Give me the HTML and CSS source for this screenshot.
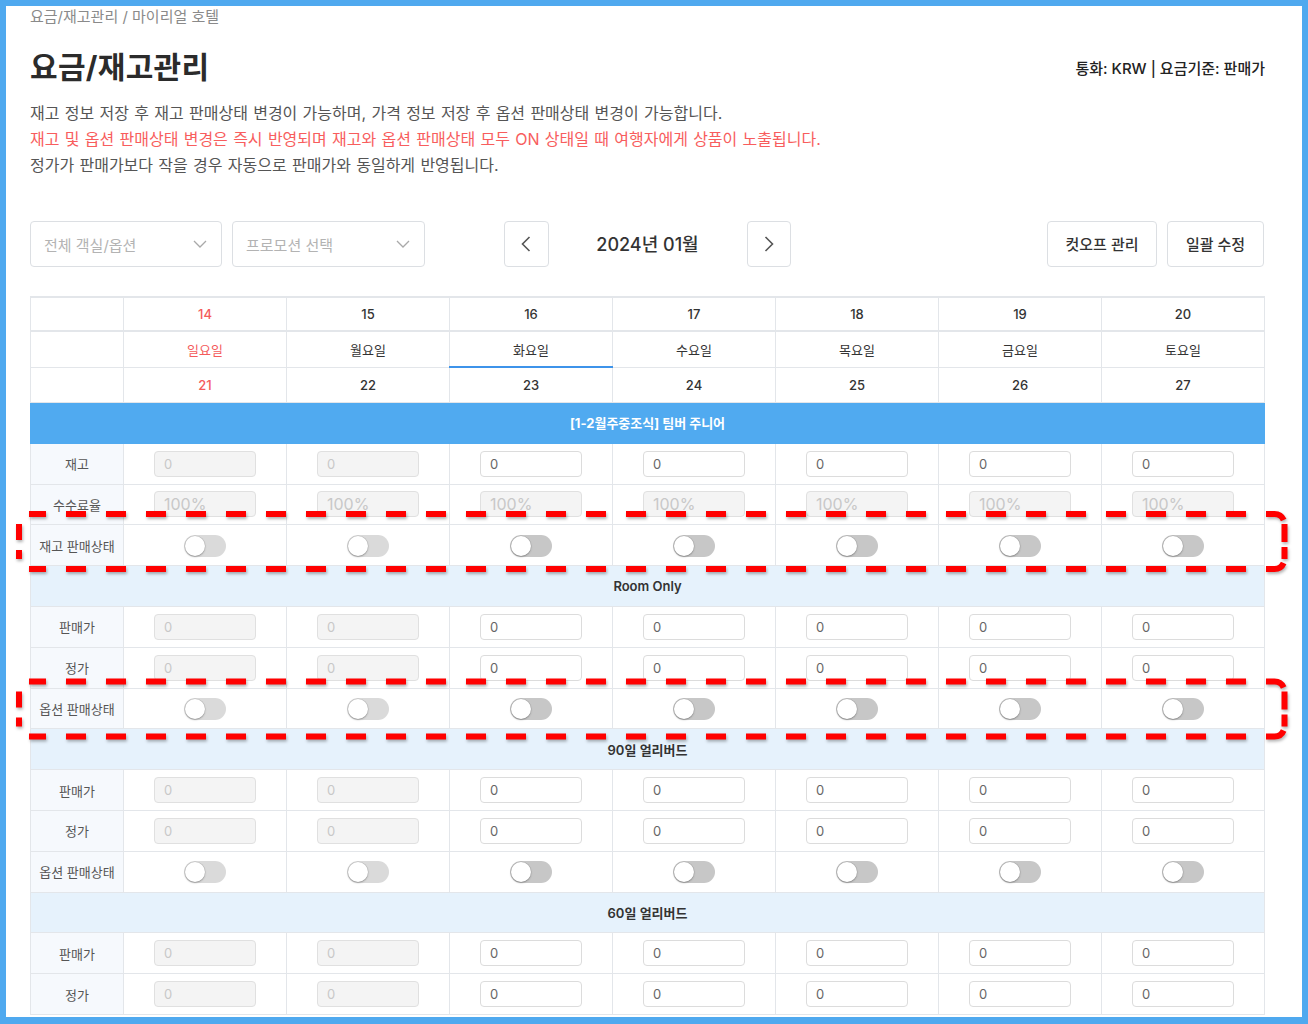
FILE: index.html
```html
<!DOCTYPE html>
<html lang="ko">
<head>
<meta charset="utf-8">
<title>요금/재고관리</title>
<link rel="stylesheet" href="styles.css">
</head>
<body>
<div class="page">
  <div class="breadcrumb">요금/재고관리 / 마이리얼 호텔</div>

  <div class="page-head">
    <h1 class="title">요금/재고관리</h1>
    <div class="currency">통화: KRW | 요금기준: 판매가</div>
  </div>

  <div class="desc">
    <p>재고 정보 저장 후 재고 판매상태 변경이 가능하며, 가격 정보 저장 후 옵션 판매상태 변경이 가능합니다.</p>
    <p class="warn">재고 및 옵션 판매상태 변경은 즉시 반영되며 재고와 옵션 판매상태 모두 ON 상태일 때 여행자에게 상품이 노출됩니다.</p>
    <p>정가가 판매가보다 작을 경우 자동으로 판매가와 동일하게 반영됩니다.</p>
  </div>

  <div class="toolbar">
    <div class="tool-left">
      <div class="select select-room"><span>전체 객실/옵션</span>
        <svg class="chev-down" width="14" height="8" viewBox="0 0 14 8"><path d="M1 1 L7 7 L13 1"/></svg>
      </div>
      <div class="select select-promo"><span>프로모션 선택</span>
        <svg class="chev-down" width="14" height="8" viewBox="0 0 14 8"><path d="M1 1 L7 7 L13 1"/></svg>
      </div>
    </div>
    <div class="month-nav">
      <button class="nav-btn nav-prev" type="button">
        <svg width="10" height="16" viewBox="0 0 10 16"><path d="M8.5 1 L1.5 8 L8.5 15"/></svg>
      </button>
      <div class="month">2024년 01월</div>
      <button class="nav-btn nav-next" type="button">
        <svg width="10" height="16" viewBox="0 0 10 16"><path d="M1.5 1 L8.5 8 L1.5 15"/></svg>
      </button>
    </div>
    <div class="tool-right">
      <button class="btn btn-cutoff" type="button">컷오프 관리</button>
      <button class="btn btn-bulk" type="button">일괄 수정</button>
    </div>
  </div>

  <table class="grid">
    <colgroup>
      <col class="col-label">
      <col class="col-day"><col class="col-day"><col class="col-day"><col class="col-day"><col class="col-day"><col class="col-day"><col class="col-day">
    </colgroup>
    <tbody>
      <tr class="head-row head-first">
        <td class="corner"></td><td class="sun">14</td><td>15</td><td>16</td><td>17</td><td>18</td><td>19</td><td>20</td>
      </tr>
      <tr class="head-row head-mid">
        <td class="corner"></td><td class="sun">일요일</td><td>월요일</td><td class="today">화요일</td><td>수요일</td><td>목요일</td><td>금요일</td><td>토요일</td>
      </tr>
      <tr class="head-row head-last">
        <td class="corner"></td><td class="sun">21</td><td>22</td><td>23</td><td>24</td><td>25</td><td>26</td><td>27</td>
      </tr>

      <tr class="room-band"><td colspan="8">[1-2월주중조식] 팀버 주니어</td></tr>

      <tr class="data-row">
        <th class="label">재고</th>
        <td><input class="cell-input" value="0" disabled></td>
        <td><input class="cell-input" value="0" disabled></td>
        <td><input class="cell-input" value="0"></td>
        <td><input class="cell-input" value="0"></td>
        <td><input class="cell-input" value="0"></td>
        <td><input class="cell-input" value="0"></td>
        <td><input class="cell-input" value="0"></td>
      </tr>
      <tr class="data-row">
        <th class="label">수수료율</th>
        <td><input class="cell-input pct" value="100%" disabled></td>
        <td><input class="cell-input pct" value="100%" disabled></td>
        <td><input class="cell-input pct" value="100%" disabled></td>
        <td><input class="cell-input pct" value="100%" disabled></td>
        <td><input class="cell-input pct" value="100%" disabled></td>
        <td><input class="cell-input pct" value="100%" disabled></td>
        <td><input class="cell-input pct" value="100%" disabled></td>
      </tr>
      <tr class="data-row">
        <th class="label">재고 판매상태</th>
        <td><span class="toggle dim"><span class="knob"></span></span></td>
        <td><span class="toggle dim"><span class="knob"></span></span></td>
        <td><span class="toggle"><span class="knob"></span></span></td>
        <td><span class="toggle"><span class="knob"></span></span></td>
        <td><span class="toggle"><span class="knob"></span></span></td>
        <td><span class="toggle"><span class="knob"></span></span></td>
        <td><span class="toggle"><span class="knob"></span></span></td>
      </tr>

      <tr class="option-band"><td colspan="8">Room Only</td></tr>
      <tr class="data-row">
        <th class="label">판매가</th>
        <td><input class="cell-input" value="0" disabled></td>
        <td><input class="cell-input" value="0" disabled></td>
        <td><input class="cell-input" value="0"></td>
        <td><input class="cell-input" value="0"></td>
        <td><input class="cell-input" value="0"></td>
        <td><input class="cell-input" value="0"></td>
        <td><input class="cell-input" value="0"></td>
      </tr>
      <tr class="data-row">
        <th class="label">정가</th>
        <td><input class="cell-input" value="0" disabled></td>
        <td><input class="cell-input" value="0" disabled></td>
        <td><input class="cell-input" value="0"></td>
        <td><input class="cell-input" value="0"></td>
        <td><input class="cell-input" value="0"></td>
        <td><input class="cell-input" value="0"></td>
        <td><input class="cell-input" value="0"></td>
      </tr>
      <tr class="data-row">
        <th class="label">옵션 판매상태</th>
        <td><span class="toggle dim"><span class="knob"></span></span></td>
        <td><span class="toggle dim"><span class="knob"></span></span></td>
        <td><span class="toggle"><span class="knob"></span></span></td>
        <td><span class="toggle"><span class="knob"></span></span></td>
        <td><span class="toggle"><span class="knob"></span></span></td>
        <td><span class="toggle"><span class="knob"></span></span></td>
        <td><span class="toggle"><span class="knob"></span></span></td>
      </tr>

      <tr class="option-band"><td colspan="8">90일 얼리버드</td></tr>
      <tr class="data-row">
        <th class="label">판매가</th>
        <td><input class="cell-input" value="0" disabled></td>
        <td><input class="cell-input" value="0" disabled></td>
        <td><input class="cell-input" value="0"></td>
        <td><input class="cell-input" value="0"></td>
        <td><input class="cell-input" value="0"></td>
        <td><input class="cell-input" value="0"></td>
        <td><input class="cell-input" value="0"></td>
      </tr>
      <tr class="data-row">
        <th class="label">정가</th>
        <td><input class="cell-input" value="0" disabled></td>
        <td><input class="cell-input" value="0" disabled></td>
        <td><input class="cell-input" value="0"></td>
        <td><input class="cell-input" value="0"></td>
        <td><input class="cell-input" value="0"></td>
        <td><input class="cell-input" value="0"></td>
        <td><input class="cell-input" value="0"></td>
      </tr>
      <tr class="data-row">
        <th class="label">옵션 판매상태</th>
        <td><span class="toggle dim"><span class="knob"></span></span></td>
        <td><span class="toggle dim"><span class="knob"></span></span></td>
        <td><span class="toggle"><span class="knob"></span></span></td>
        <td><span class="toggle"><span class="knob"></span></span></td>
        <td><span class="toggle"><span class="knob"></span></span></td>
        <td><span class="toggle"><span class="knob"></span></span></td>
        <td><span class="toggle"><span class="knob"></span></span></td>
      </tr>

      <tr class="option-band"><td colspan="8">60일 얼리버드</td></tr>
      <tr class="data-row">
        <th class="label">판매가</th>
        <td><input class="cell-input" value="0" disabled></td>
        <td><input class="cell-input" value="0" disabled></td>
        <td><input class="cell-input" value="0"></td>
        <td><input class="cell-input" value="0"></td>
        <td><input class="cell-input" value="0"></td>
        <td><input class="cell-input" value="0"></td>
        <td><input class="cell-input" value="0"></td>
      </tr>
      <tr class="data-row">
        <th class="label">정가</th>
        <td><input class="cell-input" value="0" disabled></td>
        <td><input class="cell-input" value="0" disabled></td>
        <td><input class="cell-input" value="0"></td>
        <td><input class="cell-input" value="0"></td>
        <td><input class="cell-input" value="0"></td>
        <td><input class="cell-input" value="0"></td>
        <td><input class="cell-input" value="0"></td>
      </tr>
    </tbody>
  </table>

  <svg class="annotations" width="1308" height="1024" viewBox="0 0 1308 1024">
    <g class="mark">
      <path class="edge-h" d="M29 514 H1274.5 A10 10 0 0 1 1284.5 524"/>
      <path class="edge-h" d="M29 569 H1274.5 A10 10 0 0 0 1284.5 559"/>
      <path class="edge-left" d="M19 524 V559"/>
      <path class="edge-right" d="M1284.5 524 V559"/>
    </g>
    <g class="mark" transform="translate(0 167.5)">
      <path class="edge-h" d="M29 514 H1274.5 A10 10 0 0 1 1284.5 524"/>
      <path class="edge-h" d="M29 569 H1274.5 A10 10 0 0 0 1284.5 559"/>
      <path class="edge-left" d="M19 524 V559"/>
      <path class="edge-right" d="M1284.5 524 V559"/>
    </g>
  </svg>
</div>
</body>
</html>
```

FILE: styles.css
```css
html, body {
  margin: 0;
  height: 1024px;
  overflow: hidden;
}

body {
  box-sizing: border-box;
  padding: 6px 6px 0 6px;
  background: #4fa9ef;
  font-family: Inter, "Noto Sans CJK KR", "Noto Sans", sans-serif;
  color: #333;
}

.page {
  position: relative;
  height: 1011px;
  overflow: hidden;
  background: #fff;
  padding: 0 38px 0 24px;
}

.breadcrumb {
  margin-top: 1px;
  font-size: 15px;
  line-height: 20px;
  color: #8a8a8a;
}

.page-head {
  margin-top: 20px;
  height: 40px;
  display: flex;
  align-items: center;
  justify-content: space-between;
}

.title {
  margin: 0;
  font-size: 30px;
  line-height: 40px;
  font-weight: 700;
  color: #2b2b2b;
  letter-spacing: 0.3px;
}

.currency {
  font-size: 15px;
  font-weight: 500;
  color: #222;
  margin-right: -1px;
}

.desc {
  margin-top: 13px;
}

.desc p {
  margin: 0;
  font-size: 16px;
  line-height: 26px;
  word-spacing: 0.8px;
  color: #555;
}

.desc p.warn {
  color: #f85d5d;
}

/* toolbar */
.toolbar {
  margin-top: 43px;
  height: 46px;
  display: grid;
  grid-template-columns: 1fr auto 1fr;
  align-items: stretch;
}

.tool-left {
  display: flex;
  gap: 10px;
}

.select {
  box-sizing: border-box;
  height: 46px;
  border: 1px solid #dcdfe3;
  border-radius: 4px;
  display: flex;
  align-items: center;
  justify-content: space-between;
  padding: 0 14px 0 13px;
  font-size: 15px;
  color: #b3b3b3;
}

.select-room { width: 192px; }
.select-promo { width: 193px; }

.chev-down path {
  fill: none;
  stroke: #a9a9a9;
  stroke-width: 1.3;
}

.month-nav {
  display: flex;
  align-items: stretch;
}

.nav-btn {
  box-sizing: border-box;
  width: 45px;
  height: 46px;
  border: 1px solid #dcdfe3;
  border-radius: 4px;
  background: #fff;
  padding: 0;
  display: flex;
  align-items: center;
  justify-content: center;
}

.nav-next { width: 44px; }

.nav-btn path {
  fill: none;
  stroke: #555;
  stroke-width: 1.6;
}

.month {
  width: 198px;
  display: flex;
  align-items: center;
  justify-content: center;
  font-size: 18px;
  font-weight: 500;
  color: #333;
  padding-bottom: 2px;
}

.tool-right {
  display: flex;
  justify-content: flex-end;
  gap: 10px;
}

.btn {
  box-sizing: border-box;
  height: 46px;
  border: 1px solid #dcdfe3;
  border-radius: 4px;
  background: #fff;
  font-family: inherit;
  font-size: 15px;
  font-weight: 500;
  color: #333;
  padding: 0 0 2px;
}

.btn-cutoff { width: 110px; }
.btn-bulk { width: 97px; }

/* grid table */
.grid {
  margin-top: 29px;
  width: 1234px;
  table-layout: fixed;
  border-collapse: collapse;
  border-top: 2px solid #e3e6ea;
}

.col-label { width: 93px; }
.col-day { width: 163px; }

.grid td, .grid th {
  border: 1px solid #e3e6ea;
  padding: 0;
  text-align: center;
  vertical-align: middle;
}

.head-row td {
  font-size: 13px;
  font-weight: 500;
  color: #333;
  background: #fff;
}

.head-first td { height: 32px; border-bottom: 2px solid #e3e6ea; }
.head-mid td { height: 34px; font-weight: 400; }
.head-last td { height: 34px; }

.head-row td.sun { color: #f45b5b; }
.head-mid td.today { border-bottom: 2px solid #3d93ea; }

.room-band td {
  height: 39.8px;
  background: #50aaf0;
  border-color: #50aaf0;
  color: #fff;
  font-size: 13px;
  font-weight: 700;
}

.option-band td {
  height: 39.8px;
  background: #e6f2fc;
  font-size: 13px;
  font-weight: 600;
  color: #333;
}

.data-row td, .data-row th {
  height: 39.8px;
}

.label {
  background: #f6f9fd;
  font-size: 13px;
  font-weight: 400;
  color: #555;
  white-space: nowrap;
}

.cell-input {
  box-sizing: border-box;
  width: 102px;
  height: 26px;
  border: 1px solid #dcdcdc;
  border-radius: 4px;
  background: #fff;
  padding: 0 9px;
  font-family: inherit;
  font-size: 13px;
  color: #666;
  display: block;
  margin: 0 auto;
}

.cell-input:disabled {
  background: #f4f4f4;
  color: #c8c8c8;
  border-color: #e0e0e0;
}

.cell-input.pct {
  font-size: 16px;
}

.toggle {
  position: relative;
  display: inline-block;
  vertical-align: middle;
  width: 42px;
  height: 22px;
  border-radius: 11px;
  background: #c7c7c7;
}

.toggle.dim {
  background: #dadada;
}

.knob {
  position: absolute;
  left: 1px;
  top: 1px;
  width: 20px;
  height: 20px;
  border-radius: 50%;
  background: #fff;
  box-shadow: 0 0 0 0.5px rgba(0,0,0,0.12), 0 1px 2px rgba(0,0,0,0.25);
}

/* red dashed annotation overlay */
.annotations {
  position: absolute;
  left: -6px;
  top: -6px;
  pointer-events: none;
  filter: drop-shadow(1px 2px 1.5px rgba(0,0,0,0.3));
}

.annotations path {
  fill: none;
  stroke: #ff0000;
  stroke-width: 6;
}

.annotations .edge-h {
  stroke-dasharray: 20 20;
  stroke-dashoffset: 3;
}

.annotations .edge-left {
  stroke-dasharray: 16 10 9 100;
}

.annotations .edge-right {
  stroke-dasharray: 18 5 12 100;
}
```
